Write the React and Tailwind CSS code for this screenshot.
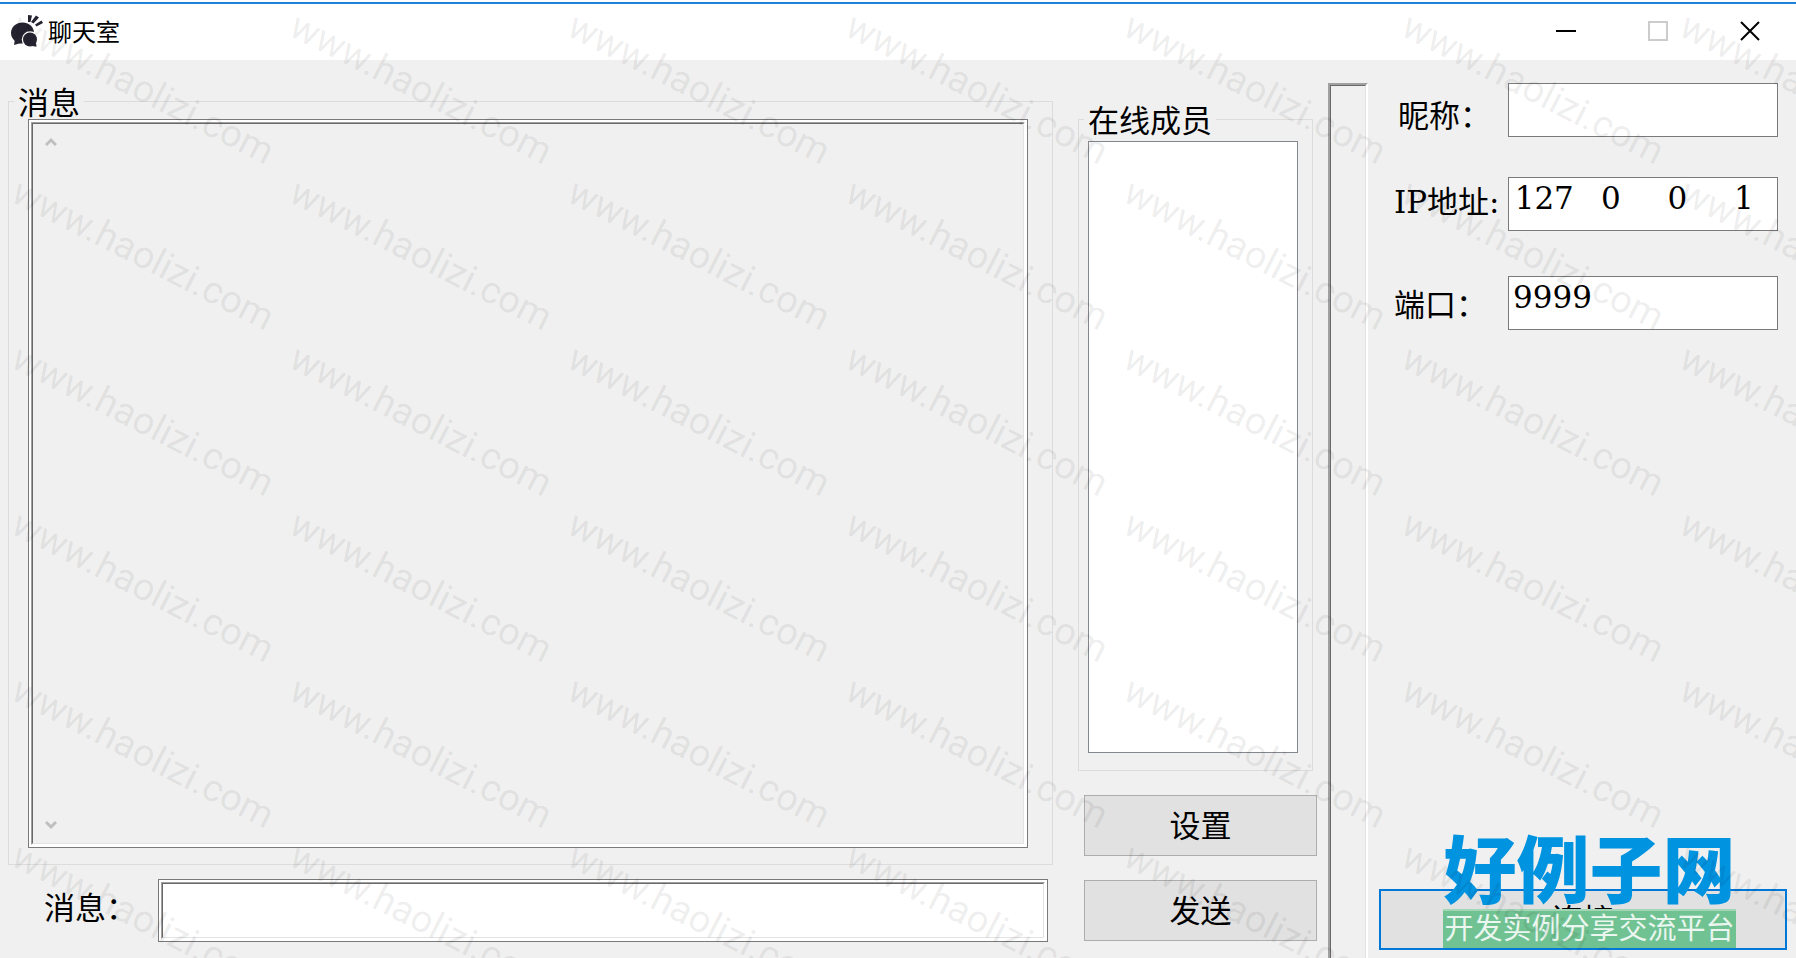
import React, { useState } from 'react';

const WATERMARK_CELLS = Array.from({ length: 42 });

function Sunken({ className = '', children }) {
  return (
    <div className={`flex border border-[#7a7a7a] bg-white p-0.5 ${className}`}>
      <div className="flex flex-1 border border-t-[#a0a0a0] border-l-[#a0a0a0] border-r-white border-b-white">
        <div className="flex flex-1 border border-t-[#696969] border-l-[#696969] border-r-[#e3e3e3] border-b-[#e3e3e3]">
          {children}
        </div>
      </div>
    </div>
  );
}

function AppIcon() {
  return (
    <svg viewBox="0 0 32 32" className="h-8 w-8" fill="#25232f" aria-hidden="true">
      <ellipse cx="11.500" cy="18" rx="11.500" ry="10.500" />
      <path d="M4 24l-1 6 7-2z" />
      <circle cx="19" cy="24.500" r="8.200" fill="#fff" />
      <circle cx="19" cy="24.500" r="7" />
      <path d="M21 31l4.500.8-.5-4z" />
      <path d="M17 0l4 .500L19.500 7h-2.500zM25 .5l3 2L22.500 8.500l-2.500-1.500zM30.500 5.500L32 8l-6.500 3.500-1.500-2z" />
    </svg>
  );
}

function TitleBar() {
  return (
    <header className="flex h-[60px] items-center bg-white pt-0.5 pl-[11px]">
      <AppIcon />
      <h1 className="ml-[5px] flex-1 text-2xl font-['Noto_Sans_CJK_SC',sans-serif]">聊天室</h1>
      <button type="button" aria-label="最小化" className="flex w-[92px] justify-center">
        <span className="h-0.5 w-5 bg-black" />
      </button>
      <button type="button" aria-label="最大化" disabled className="flex w-[92px] justify-center">
        <span className="h-5 w-5 border-2 border-[#cccccc]" />
      </button>
      <button type="button" aria-label="关闭" className="flex w-[92px] justify-center">
        <svg viewBox="0 0 20 20" className="h-5 w-5" fill="none" stroke="#000" strokeWidth="2">
          <path d="M1 1l18 18M19 1L1 19" />
        </svg>
      </button>
    </header>
  );
}

function ScrollArrow({ label, d }) {
  return (
    <button type="button" aria-label={label} className="flex h-9 w-9 items-center justify-center">
      <svg viewBox="0 0 12 10" className="h-2.5 w-3" fill="none" stroke="#bfbfbf" strokeWidth="3">
        <path d={d} />
      </svg>
    </button>
  );
}

function MessagePanel() {
  const [message, setMessage] = useState('');

  return (
    <section className="flex flex-1 flex-col pt-[25px] pb-4 pl-2">
      <fieldset className="flex flex-1 flex-col border border-[#dcdcdc] pr-6 pb-4 pl-[19px]">
        <legend className="-ml-3.5 px-1 pt-1 leading-7">消息</legend>
        <Sunken className="mt-0.5 flex-1">
          <div className="flex flex-1 bg-[#f0f0f0]">
            <div className="flex flex-col justify-between">
              <ScrollArrow label="向上滚动" d="M1 8l5-5 5 5" />
              <ScrollArrow label="向下滚动" d="M1 2l5 5 5-5" />
            </div>
            <textarea readOnly aria-label="消息" className="flex-1 resize-none outline-none" />
          </div>
        </Sunken>
      </fieldset>
      <div className="mt-[14px] mr-[5px] flex items-center">
        <label htmlFor="message" className="w-[150px] pb-1.5 pl-9">消息：</label>
        <Sunken className="h-[63px] flex-1">
          <input
            id="message"
            value={message}
            onChange={(e) => setMessage(e.target.value)}
            className="min-w-0 flex-1 px-1 outline-none"
          />
        </Sunken>
      </div>
    </section>
  );
}

function MembersPanel() {
  return (
    <section className="ml-[25px] flex w-[239px] flex-col pt-[43px] pb-[17px]">
      <fieldset className="mr-1 flex flex-1 flex-col border border-[#dcdcdc] pr-[14px] pb-[17px] pl-[9px]">
        <legend className="-ml-1 px-1 pt-1 leading-7">在线成员</legend>
        <ul role="listbox" aria-label="在线成员" className="mt-1.5 flex-1 border border-[#828790] bg-white" />
      </fieldset>
      <button type="button" className="mt-6 ml-1.5 h-[61px] border border-[#adadad] bg-[#e1e1e1]">设置</button>
      <button type="button" className="mt-6 ml-1.5 h-[61px] border border-[#adadad] bg-[#e1e1e1]">发送</button>
    </section>
  );
}

function SiteLogo() {
  return (
    <div className="absolute bottom-0.5 left-16 w-[293px] text-center">
      <div className="text-[73px] leading-[76px] font-black whitespace-nowrap text-[#0093e0]">好例子网</div>
      <div className="h-[39px] border-t-2 border-[#a3d5b7] bg-[#70c292] text-[29px] leading-9 whitespace-nowrap text-white/85">
        开发实例分享交流平台
      </div>
    </div>
  );
}

function ConnectionPanel() {
  const [nickname, setNickname] = useState('');
  const [ip, setIp] = useState(['127', '0', '0', '1']);
  const [port, setPort] = useState('9999');

  const changeIp = (index, value) => {
    setIp(ip.map((part, i) => (i === index ? value : part)));
  };

  return (
    <section className="flex w-[428px] flex-col pt-[23px] pb-2">
      <div className="flex items-center pr-[18px] pl-[26px]">
        <label htmlFor="nickname" className="flex-1 pt-3 pl-1">昵称：</label>
        <input
          id="nickname"
          value={nickname}
          onChange={(e) => setNickname(e.target.value)}
          className="h-[54px] w-[270px] border border-[#7a7a7a] bg-white px-1"
        />
      </div>
      <div className="mt-10 flex items-center pr-[18px] pl-[26px]">
        <label htmlFor="ip-0" className="flex-1 pb-1 whitespace-nowrap">IP地址:</label>
        <div className="flex h-[54px] w-[270px] items-start border border-[#7a7a7a] bg-white pl-0.5">
          {ip.map((part, index) => (
            <input
              key={index}
              id={`ip-${index}`}
              aria-label={`IP地址 ${index + 1}`}
              value={part}
              onChange={(e) => changeIp(index, e.target.value)}
              className="h-10 min-w-0 flex-1 text-center leading-10 outline-none"
            />
          ))}
        </div>
      </div>
      <div className="mt-[45px] flex items-center pr-[18px] pl-[26px]">
        <label htmlFor="port" className="flex-1 pt-1">端口：</label>
        <div className="flex h-[54px] w-[270px] items-start border border-[#7a7a7a] bg-white">
          <input
            id="port"
            value={port}
            onChange={(e) => setPort(e.target.value)}
            className="h-10 min-w-0 flex-1 pl-1 leading-10 outline-none"
          />
        </div>
      </div>
      <div className="relative mt-auto mr-[9px] ml-[11px] flex">
        <button type="button" className="h-[61px] flex-1 border-2 border-[#0078d7] bg-[#e1e1e1]">连接</button>
        <SiteLogo />
      </div>
    </section>
  );
}

function Watermark() {
  return (
    <div aria-hidden="true" className="pointer-events-none absolute inset-0 overflow-hidden">
      <div className="grid w-[1946px] grid-cols-7">
        {WATERMARK_CELLS.map((_, i) => (
          <div key={i} className="h-[166px] pt-[5px] pl-6">
            <span className="block w-max origin-top-left rotate-[27deg] font-[Roboto,sans-serif] text-[38px] leading-10 text-black/8">
              www.haolizi.com
            </span>
          </div>
        ))}
      </div>
    </div>
  );
}

export default function App() {
  return (
    <div className="relative flex min-h-screen flex-col overflow-hidden bg-[#f0f0f0] font-['DejaVu_Serif','Noto_Sans_CJK_SC',serif] text-[31px] leading-10 text-black">
      <div className="absolute inset-x-0 top-0.5 h-0.5 bg-[#1e82d8]" />
      <TitleBar />
      <main className="flex flex-1">
        <MessagePanel />
        <MembersPanel />
        <div className="mt-[23px] ml-[11px] flex w-10 border-t-2 border-r-2 border-l-2 border-t-[#a0a0a0] border-r-white border-l-[#a0a0a0]">
          <div className="flex-1 border-t border-r border-l border-t-[#696969] border-r-[#e3e3e3] border-l-[#696969]" />
        </div>
        <ConnectionPanel />
      </main>
      <Watermark />
    </div>
  );
}
